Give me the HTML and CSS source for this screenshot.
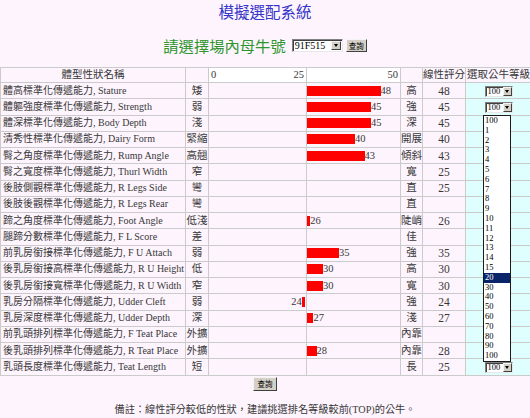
FILE: index.html
```html
<!DOCTYPE html>
<html>
<head>
<meta charset="utf-8">
<link rel="stylesheet" href="styles.css">
</head>
<body>
<h1 class="title">模擬選配系統</h1>
<div class="picker">
  <span class="picker-label">請選擇場內母牛號</span>
  <span class="combo combo-cow"><span class="combo-text">91F515</span><span class="combo-arrow"><i></i></span></span>
  <span class="btn">查詢</span>
</div>
<div class="grid-wrap">
<table class="grid">
  <colgroup>
    <col class="c1"><col class="c2"><col class="c3"><col class="c4"><col class="c5"><col class="c6"><col class="c7">
  </colgroup>
  <tr class="head">
    <td class="name-h">體型性狀名稱</td>
    <td></td>
    <td class="scale"><div class="scale-row"><span>0</span><span>25</span></div></td>
    <td class="scale"><div class="scale-row end"><span>50</span></div></td>
    <td></td>
    <td class="ctr">線性評分</td>
    <td class="ctr">選取公牛等級</td>
  </tr>
  <tr><td class="name">體高標準化傳遞能力, Stature</td><td class="ctr">矮</td><td></td><td><div class="bar-r"><span class="bar" style="width:73.6px"></span><span class="val">48</span></div></td><td class="ctr">高</td><td class="num">48</td><td class="pick"><span class="combo"><span class="combo-text">100</span><span class="combo-arrow"><i></i></span></span></td></tr>
  <tr><td class="name">體軀強度標準化傳遞能力, Strength</td><td class="ctr">弱</td><td></td><td><div class="bar-r"><span class="bar" style="width:64px"></span><span class="val">45</span></div></td><td class="ctr">強</td><td class="num">45</td><td class="pick"><span class="combo"><span class="combo-text">100</span><span class="combo-arrow"><i></i></span></span></td></tr>
  <tr><td class="name">體深標準化傳遞能力, Body Depth</td><td class="ctr">淺</td><td></td><td><div class="bar-r"><span class="bar" style="width:64px"></span><span class="val">45</span></div></td><td class="ctr">深</td><td class="num">45</td><td class="pick"></td></tr>
  <tr><td class="name">清秀性標準化傳遞能力, Dairy Form</td><td class="ctr">緊縮</td><td></td><td><div class="bar-r"><span class="bar" style="width:48px"></span><span class="val">40</span></div></td><td class="ctr">開展</td><td class="num">40</td><td class="pick"></td></tr>
  <tr><td class="name">臀之角度標準化傳遞能力, Rump Angle</td><td class="ctr">高翹</td><td></td><td><div class="bar-r"><span class="bar" style="width:57.6px"></span><span class="val">43</span></div></td><td class="ctr">傾斜</td><td class="num">43</td><td class="pick"></td></tr>
  <tr><td class="name">臀之寬度標準化傳遞能力, Thurl Width</td><td class="ctr">窄</td><td></td><td></td><td class="ctr">寬</td><td class="num">25</td><td class="pick"></td></tr>
  <tr><td class="name">後肢側觀標準化傳遞能力, R Legs Side</td><td class="ctr">彎</td><td></td><td></td><td class="ctr">直</td><td class="num">25</td><td class="pick"></td></tr>
  <tr><td class="name">後肢後觀標準化傳遞能力, R Legs Rear</td><td class="ctr">彎</td><td></td><td></td><td class="ctr">直</td><td class="num"></td><td class="pick"></td></tr>
  <tr><td class="name">蹄之角度標準化傳遞能力, Foot Angle</td><td class="ctr">低淺</td><td></td><td><div class="bar-r"><span class="bar" style="width:3.2px"></span><span class="val">26</span></div></td><td class="ctr">陡峭</td><td class="num">26</td><td class="pick"></td></tr>
  <tr><td class="name">腿蹄分數標準化傳遞能力, F L Score</td><td class="ctr">差</td><td></td><td></td><td class="ctr">佳</td><td class="num"></td><td class="pick"></td></tr>
  <tr><td class="name">前乳房銜接標準化傳遞能力, F U Attach</td><td class="ctr">弱</td><td></td><td><div class="bar-r"><span class="bar" style="width:32px"></span><span class="val">35</span></div></td><td class="ctr">強</td><td class="num">35</td><td class="pick"></td></tr>
  <tr><td class="name">後乳房銜接高標準化傳遞能力, R U Height</td><td class="ctr">低</td><td></td><td><div class="bar-r"><span class="bar" style="width:16px"></span><span class="val">30</span></div></td><td class="ctr">高</td><td class="num">30</td><td class="pick"></td></tr>
  <tr><td class="name">後乳房銜接寬標準化傳遞能力, R U Width</td><td class="ctr">窄</td><td></td><td><div class="bar-r"><span class="bar" style="width:16px"></span><span class="val">30</span></div></td><td class="ctr">寬</td><td class="num">30</td><td class="pick"></td></tr>
  <tr><td class="name">乳房分隔標準化傳遞能力, Udder Cleft</td><td class="ctr">弱</td><td><div class="bar-l"><span class="val">24</span><span class="bar" style="width:3.2px"></span></div></td><td></td><td class="ctr">強</td><td class="num">24</td><td class="pick"></td></tr>
  <tr><td class="name">乳房深度標準化傳遞能力, Udder Depth</td><td class="ctr">深</td><td></td><td><div class="bar-r"><span class="bar" style="width:6.4px"></span><span class="val">27</span></div></td><td class="ctr">淺</td><td class="num">27</td><td class="pick"></td></tr>
  <tr><td class="name">前乳頭排列標準化傳遞能力, F Teat Place</td><td class="ctr">外擴</td><td></td><td></td><td class="ctr">內靠</td><td class="num"></td><td class="pick"></td></tr>
  <tr><td class="name">後乳頭排列標準化傳遞能力, R Teat Place</td><td class="ctr">外擴</td><td></td><td><div class="bar-r"><span class="bar" style="width:9.6px"></span><span class="val">28</span></div></td><td class="ctr">內靠</td><td class="num">28</td><td class="pick"></td></tr>
  <tr><td class="name">乳頭長度標準化傳遞能力, Teat Length</td><td class="ctr">短</td><td></td><td></td><td class="ctr">長</td><td class="num">25</td><td class="pick"><span class="combo"><span class="combo-text">100</span><span class="combo-arrow"><i></i></span></span></td></tr>
</table>
<ul class="listbox">
  <li>100</li><li>1</li><li>2</li><li>3</li><li>4</li><li>5</li><li>6</li><li>7</li><li>8</li><li>9</li><li>10</li><li>11</li><li>12</li><li>13</li><li>14</li><li>15</li><li class="hl">20</li><li>30</li><li>40</li><li>50</li><li>60</li><li>70</li><li>80</li><li>90</li><li>100</li>
</ul>
</div>
<div class="submit"><span class="btn">查詢</span></div>
<p class="note">備註：線性評分較低的性狀，建議挑選排名等級較前(TOP)的公牛。</p>
<div class="bottom-rule"></div>
</body>
</html>
```
FILE: styles.css
```css
html, body {
  margin: 0;
  padding: 0;
  background: #fdf4fd;
}
body {
  font-family: "Liberation Serif", "Noto Sans CJK TC", serif;
  color: #383838;
  width: 530px;
  overflow: hidden;
}
.title {
  margin: 0;
  padding-top: 1px;
  height: 20px;
  line-height: 20px;
  font-size: 15.5px;
  font-weight: normal;
  text-align: center;
  color: #3535c8;
  font-family: "Noto Sans CJK TC", sans-serif;
}
.picker {
  margin-top: 14px;
  height: 20px;
  display: flex;
  align-items: center;
  justify-content: center;
  padding-left: 0;
}
.picker-label {
  font-family: "Noto Sans CJK TC", sans-serif;
  font-size: 15.3px;
  line-height: 20px;
  color: #2f962f;
  margin-right: 6px;
}
.combo {
  display: inline-flex;
  box-sizing: border-box;
  background: #fff;
  border: 1px solid;
  border-color: #808080 #e8e8e8 #e8e8e8 #808080;
  box-shadow: inset 1px 1px 0 #404040;
  padding: 1px 1px 1px 2px;
  align-items: stretch;
}
.combo-cow {
  width: 51px;
  height: 13px;
}
.combo-text {
  flex: 1;
  font-size: 10px;
  line-height: 9px;
  color: #000;
  overflow: hidden;
}
.combo-arrow {
  box-sizing: border-box;
  width: 10px;
  background: #d4d0c8;
  border: 1px solid;
  border-color: #f4f4f4 #404040 #404040 #f4f4f4;
  display: flex;
  align-items: center;
  justify-content: center;
}
.combo-arrow i {
  display: block;
  width: 0;
  height: 0;
  border-left: 2.5px solid transparent;
  border-right: 2.5px solid transparent;
  border-top: 3px solid #000;
}
.btn {
  display: inline-flex;
  align-items: center;
  justify-content: center;
  box-sizing: border-box;
  height: 13px;
  padding: 0 2px;
  margin-left: 3px;
  background: #d4d0c8;
  border: 1px solid;
  border-color: #f4f4f4 #404040 #404040 #f4f4f4;
  font-family: "Noto Sans CJK TC", sans-serif;
  font-size: 7.5px;
  line-height: 9px;
  color: #000;
}
.grid-wrap {
  position: relative;
  margin-top: 12px;
}
.grid {
  border-collapse: collapse;
  table-layout: fixed;
  width: 531px;
  font-size: 10.5px;
}
.c1 { width: 185px; }
.c2 { width: 23px; }
.c3 { width: 98px; }
.c4 { width: 94px; }
.c5 { width: 22px; }
.c6 { width: 43px; }
.c7 { width: 66px; }
.grid td {
  border: 1px solid #cbcbcb;
  height: 15.25px;
  padding: 0;
  white-space: nowrap;
  overflow: hidden;
  line-height: 14px;
}
.grid .head td {
  height: 14px;
}
.grid .head .scale {
  background: #fff;
}
.scale-row {
  display: flex;
  justify-content: space-between;
  padding: 0 2px;
}
.scale-row.end {
  justify-content: flex-end;
}
.name-h {
  text-align: center;
}
.name {
  font-size: 10px;
  padding-left: 2px !important;
}
.ctr {
  text-align: center;
}
.num {
  text-align: center;
  font-size: 11.5px;
}
.pick {
  background: #dfffff;
  text-align: center;
}
.pick .combo {
  width: 28px;
  height: 11px;
  padding: 0 0 0 2px;
  vertical-align: middle;
  text-align: left;
}
.pick .combo-text {
  font-size: 8.5px;
  line-height: 9px;
}
.pick .combo-arrow {
  width: 9px;
}
.bar-r, .bar-l {
  display: flex;
  align-items: center;
  height: 14px;
}
.bar-l {
  justify-content: flex-end;
  padding-right: 1px;
}
.bar {
  display: block;
  height: 10px;
  background: #ff0000;
}
.val {
  font-size: 10.5px;
  line-height: 10px;
}
.listbox {
  position: absolute;
  top: 48px;
  left: 483px;
  width: 28px;
  margin: 0;
  padding: 0;
  list-style: none;
  background: #fff;
  border: 1px solid #1a1a1a;
  box-sizing: border-box;
  height: 247px;
}
.listbox li {
  height: 9.8px;
  line-height: 9.8px;
  font-size: 8.5px;
  padding-left: 1px;
  color: #000;
}
.listbox li.hl {
  background: #0a246a;
  color: #fff;
}
.submit {
  margin-top: 1px;
  height: 14px;
  display: flex;
  justify-content: center;
}
.submit .btn {
  width: 24px;
  height: 14px;
  margin-left: 0;
}
.note {
  margin: 12px 0 0;
  height: 14px;
  line-height: 14px;
  font-size: 10.2px;
  text-align: center;
  color: #3a3a3a;
}
.bottom-rule {
  margin-top: 2px;
  border-top: 1px solid #a8a8a8;
}
```
